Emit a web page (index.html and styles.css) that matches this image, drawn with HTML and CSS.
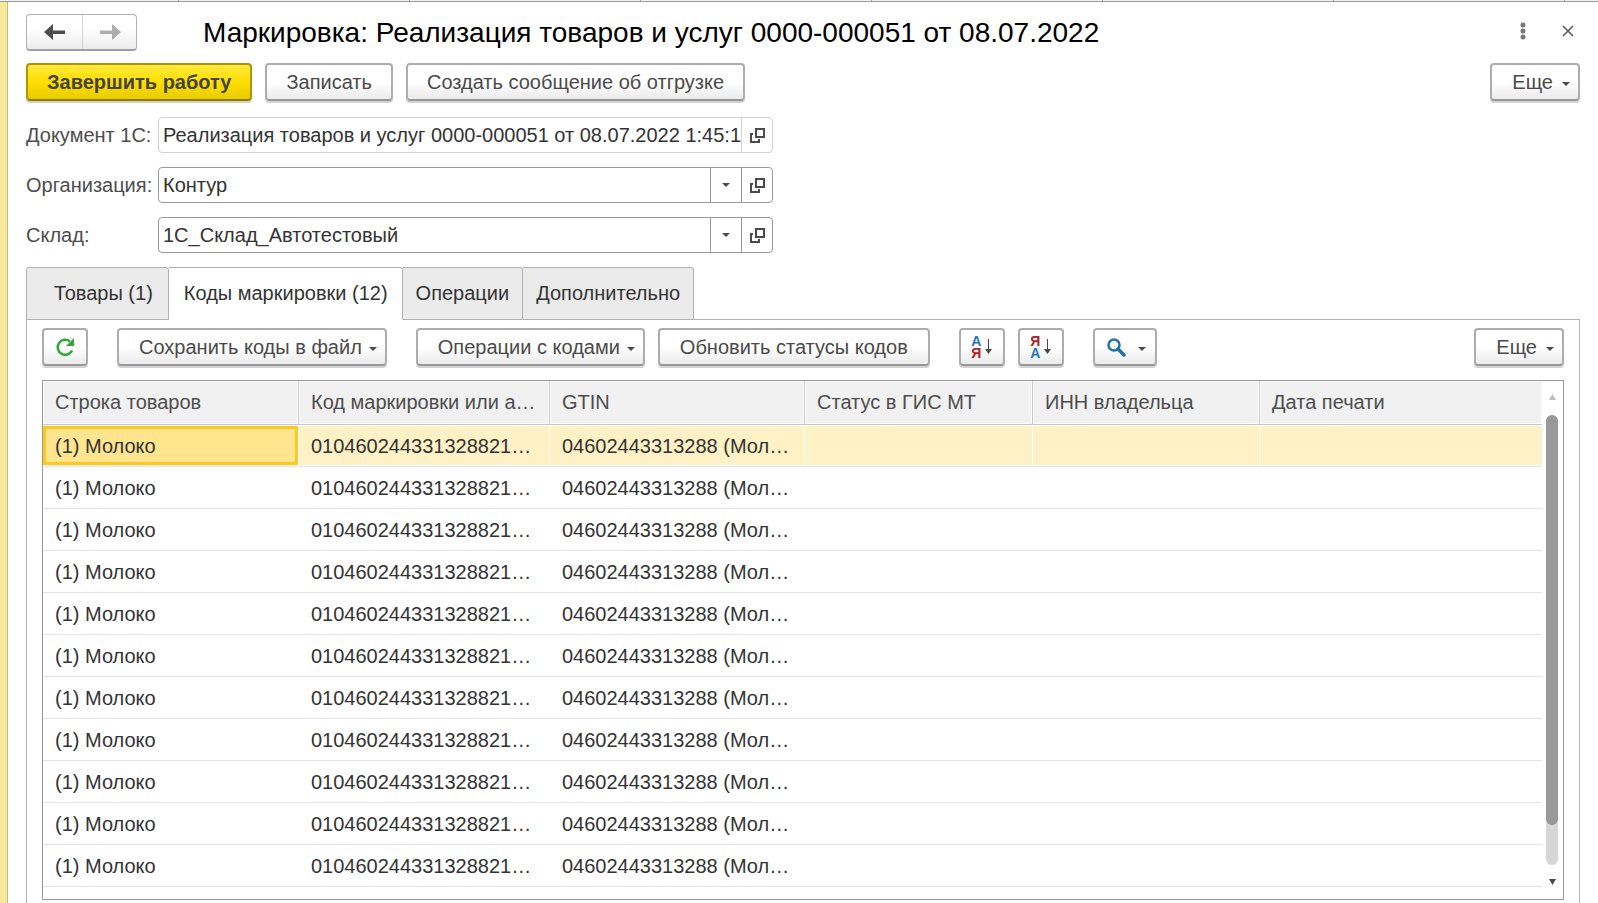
FILE: index.html
```html
<!DOCTYPE html>
<html lang="ru">
<head>
<meta charset="utf-8">
<title>Маркировка: Реализация товаров и услуг</title>
<link rel="stylesheet" href="styles.css">
</head>
<body>
<svg class="defs" aria-hidden="true">
  <symbol id="open" viewBox="0 0 15 15"><path d="M6 1h8v8H6z" fill="none" stroke="#4a4a4a" stroke-width="2"/><path d="M0 5h3v2H2v6h6v-2h2v4H0z" fill="#4a4a4a"/></symbol>
  <symbol id="caret" viewBox="0 0 8 4"><path d="M0 0h8L4 4z" fill="#4a4a4a"/></symbol>
  <symbol id="down" viewBox="0 0 7 16"><path d="M3 0h1v10h3L3.500 15 0 10h3z" fill="#4a4a4a"/></symbol>
</svg>
<div class="window-tabs"><i></i><i></i><i></i><i></i><i></i><i></i><i></i></div>
<main class="form">
  <header class="title-row">
    <div class="nav">
      <button type="button" aria-label="Назад"><svg width="22" height="16" viewBox="0 0 22 16"><path d="M0 8l9-8v6.500h12v3.500H9v6z" fill="#4d4d4d"/></svg></button>
      <button type="button" aria-label="Вперед"><svg width="22" height="16" viewBox="0 0 22 16"><path d="M22 8l-9-8v6.500H1v3.500h12v6z" fill="#adadad"/></svg></button>
    </div>
    <h1>Маркировка: Реализация товаров и услуг 0000-000051 от 08.07.2022</h1>
    <div class="window-actions">
      <button type="button" aria-label="Меню"><svg width="6" height="18" viewBox="0 0 6 18"><g fill="#777"><circle cx="3" cy="3" r="2.500"/><circle cx="3" cy="9" r="2.500"/><circle cx="3" cy="15" r="2.500"/></g></svg></button>
      <button type="button" aria-label="Закрыть"><svg width="12" height="12" viewBox="0 0 12 12"><path d="M1 1l10 10M11 1L1 11" stroke="#555" stroke-width="1.500"/></svg></button>
    </div>
  </header>
  <div class="commands">
    <button type="button" class="btn primary">Завершить работу</button>
    <button type="button" class="btn">Записать</button>
    <button type="button" class="btn">Создать сообщение об отгрузке</button>
    <button type="button" class="btn drop push">Еще<svg class="caret"><use href="#caret"/></svg></button>
  </div>
  <div class="fields">
    <label for="doc">Документ 1С:</label>
    <div class="field readonly"><input id="doc" readonly value="Реализация товаров и услуг 0000-000051 от 08.07.2022 1:45:1"><button type="button" aria-label="Открыть документ"><svg class="open"><use href="#open"/></svg></button></div>
    <label for="org">Организация:</label>
    <div class="field"><input id="org" value="Контур"><button type="button" aria-label="Выбрать организацию"><svg class="caret"><use href="#caret"/></svg></button><button type="button" aria-label="Открыть организацию"><svg class="open"><use href="#open"/></svg></button></div>
    <label for="store">Склад:</label>
    <div class="field"><input id="store" value="1С_Склад_Автотестовый"><button type="button" aria-label="Выбрать склад"><svg class="caret"><use href="#caret"/></svg></button><button type="button" aria-label="Открыть склад"><svg class="open"><use href="#open"/></svg></button></div>
  </div>
  <div class="tabs" role="tablist">
    <button type="button" role="tab" class="first">Товары (1)</button>
    <button type="button" role="tab" aria-selected="true">Коды маркировки (12)</button>
    <button type="button" role="tab">Операции</button>
    <button type="button" role="tab">Дополнительно</button>
  </div>
  <section class="panel">
    <div class="toolbar">
      <div class="group"><button type="button" class="btn icon" aria-label="Обновить"><svg width="20" height="20" viewBox="0 0 20 20"><path d="M17 13.500A7.500 7.500 0 1 1 15 4.500" fill="none" stroke="#2ea836" stroke-width="2.500"/><path d="M19 1v8h-8z" fill="#2ea836"/></svg></button></div>
      <div class="group"><button type="button" class="btn drop">Сохранить коды в файл<svg class="caret"><use href="#caret"/></svg></button></div>
      <div class="group">
        <button type="button" class="btn drop">Операции с кодами<svg class="caret"><use href="#caret"/></svg></button>
        <button type="button" class="btn">Обновить статусы кодов</button>
      </div>
      <div class="group">
        <button type="button" class="btn icon sort" aria-label="По возрастанию"><span class="letters"><b class="blue">А</b><b class="red">Я</b></span><svg width="7" height="16"><use href="#down"/></svg></button>
        <button type="button" class="btn icon sort" aria-label="По убыванию"><span class="letters"><b class="red">Я</b><b class="blue">А</b></span><svg width="7" height="16"><use href="#down"/></svg></button>
      </div>
      <div class="group"><button type="button" class="btn search" aria-label="Найти"><svg width="19" height="19" viewBox="0 0 19 19"><circle cx="7" cy="7" r="5.500" fill="none" stroke="#2271ab" stroke-width="2.500"/><path d="M11 11l6 6" stroke="#2271ab" stroke-width="3.500" stroke-linecap="round"/></svg><svg class="caret"><use href="#caret"/></svg></button></div>
      <button type="button" class="btn drop push">Еще<svg class="caret"><use href="#caret"/></svg></button>
    </div>
    <div class="grid">
      <table>
        <colgroup><col class="c1"><col class="c2"><col class="c3"><col class="c4"><col class="c5"><col></colgroup>
        <thead><tr><th>Строка товаров</th><th>Код маркировки или а…</th><th>GTIN</th><th>Статус в ГИС МТ</th><th>ИНН владельца</th><th>Дата печати</th></tr></thead>
        <tbody>
          <tr class="current"><td>(1) Молоко</td><td>010460244331328821…</td><td>04602443313288 (Мол…</td><td></td><td></td><td></td></tr>
          <tr><td>(1) Молоко</td><td>010460244331328821…</td><td>04602443313288 (Мол…</td><td></td><td></td><td></td></tr>
          <tr><td>(1) Молоко</td><td>010460244331328821…</td><td>04602443313288 (Мол…</td><td></td><td></td><td></td></tr>
          <tr><td>(1) Молоко</td><td>010460244331328821…</td><td>04602443313288 (Мол…</td><td></td><td></td><td></td></tr>
          <tr><td>(1) Молоко</td><td>010460244331328821…</td><td>04602443313288 (Мол…</td><td></td><td></td><td></td></tr>
          <tr><td>(1) Молоко</td><td>010460244331328821…</td><td>04602443313288 (Мол…</td><td></td><td></td><td></td></tr>
          <tr><td>(1) Молоко</td><td>010460244331328821…</td><td>04602443313288 (Мол…</td><td></td><td></td><td></td></tr>
          <tr><td>(1) Молоко</td><td>010460244331328821…</td><td>04602443313288 (Мол…</td><td></td><td></td><td></td></tr>
          <tr><td>(1) Молоко</td><td>010460244331328821…</td><td>04602443313288 (Мол…</td><td></td><td></td><td></td></tr>
          <tr><td>(1) Молоко</td><td>010460244331328821…</td><td>04602443313288 (Мол…</td><td></td><td></td><td></td></tr>
          <tr><td>(1) Молоко</td><td>010460244331328821…</td><td>04602443313288 (Мол…</td><td></td><td></td><td></td></tr>
        </tbody>
      </table>
      <div class="scroll">
        <svg width="7" height="6" viewBox="0 0 7 6"><path d="M0 6h7L3.500 0z" fill="#bdbdbd"/></svg>
        <div class="track"><div class="thumb"></div></div>
        <svg width="7" height="6" viewBox="0 0 7 6"><path d="M0 0h7L3.500 6z" fill="#4a4a4a"/></svg>
      </div>
    </div>
  </section>
</main>
</body>
</html>
```
FILE: styles.css
```css
* { box-sizing: border-box; }
body {
  margin: 0;
  min-height: 100vh;
  display: flex;
  flex-direction: column;
  background: #fff;
  color: #333;
  font: 20px/24px "Liberation Sans", Arial, sans-serif;
}
button, input { font: inherit; color: inherit; }
button { margin: 0; padding: 0; border: 0; background: none; white-space: nowrap; }
svg { flex: none; display: block; }
.defs { position: absolute; width: 0; height: 0; }
.caret { width: 8px; height: 4px; }
.btn .caret { margin-top: 4px; }
.open { width: 15px; height: 15px; }

.window-tabs { display: flex; height: 2px; background: #f2f2f2; border-bottom: 1px solid #999; }
.window-tabs i { width: 231px; border-right: 1px solid #999; }
.window-tabs i:first-child { width: 179px; }

.form {
  flex: 1;
  display: flex;
  flex-direction: column;
  padding: 12px 18px 0 19px;
  border-left: 7px solid #fbe99b;
  box-shadow: inset 1px 0 #c8bc7c;
}

.title-row { display: flex; align-items: center; height: 37px; }
.nav {
  display: flex;
  height: 37px;
  border: 1px solid #b3b3b3;
  border-bottom: 2px solid #a0a0a0;
  border-radius: 4px;
  background: linear-gradient(#fff 40%, #ececec);
}
.nav button { width: 55px; display: flex; align-items: center; justify-content: center; }
.nav button + button { width: 54px; border-left: 1px solid #d2d2d2; }
h1 { margin: 0 0 0 66px; font-size: 28px; line-height: 36px; font-weight: 400; color: #000; white-space: nowrap; }
.window-actions { display: flex; align-items: center; gap: 36px; margin-left: auto; padding: 0 6px 3px 0; }

.btn {
  display: flex;
  align-items: center;
  justify-content: center;
  height: 38px;
  padding: 0 20px;
  border: 2px solid #adadad;
  border-bottom-color: #979797;
  border-radius: 4px;
  background: linear-gradient(#fff 50%, #ebebeb);
  box-shadow: 0 2px #d2d2d2;
  color: #4a4a4a;
}
.commands .btn { padding: 0 19px; }
.btn.drop, .commands .drop { gap: 7px; padding: 0 8px 0 20px; }
.btn.push, .commands .push { gap: 9px; }
.btn.icon { width: 46px; padding: 0; }
.btn.search { gap: 12px; padding: 0 9px 0 12px; }
.btn.primary {
  border-color: #ab9600;
  border-bottom-color: #8f7e00;
  background: linear-gradient(#ffe93e, #ffdf00 50%, #e8cb00);
  color: #444;
  font-weight: 700;
}
.push { margin-left: auto; }
.commands { display: flex; gap: 13px; margin-top: 12px; }

.fields {
  display: grid;
  grid-template-columns: 132px 615px;
  row-gap: 14px;
  align-items: center;
  margin-top: 16px;
}
.fields label { color: #4d4d4d; white-space: nowrap; }
.field { display: flex; height: 36px; border: 1px solid #999; border-radius: 4px; }
.field input { flex: 1; min-width: 0; padding: 0 0 0 4px; border: 0; outline: 0; background: none; }
.field button { width: 31px; display: flex; align-items: center; justify-content: center; border-left: 1px solid #999; }
.field.readonly, .field.readonly button { border-color: #d2d2d2; }

.tabs { position: relative; z-index: 1; display: flex; align-self: flex-start; margin-top: 14px; }
.tabs button {
  height: 53px;
  padding: 0 13px 2px;
  border: 1px solid #b0b0b0;
  border-left-width: 0;
  border-radius: 0 3px 0 0;
  background: #ebebeb;
}
.tabs .first { padding-left: 27px; padding-right: 15px; border-left-width: 1px; border-radius: 3px 3px 0 0; }
.tabs [aria-selected] { padding-left: 15px; padding-right: 14px; background: #fff; border-bottom-color: #fff; }

.panel {
  flex: 1;
  display: flex;
  flex-direction: column;
  margin-top: -1px;
  padding: 8px 15px 3px;
  border: 1px solid #b0b0b0;
  border-bottom: 0;
}
.toolbar { display: flex; gap: 29px; }
.group { display: flex; gap: 13px; }
.sort { gap: 4px; }
.letters { display: flex; flex-direction: column; font-size: 14px; line-height: 12px; }
.blue { color: #1f78bd; }
.red { color: #b3202a; }

.grid { flex: 1; display: flex; margin-top: 14px; border: 1px solid #999; }
table { flex: 1; align-self: flex-start; width: 0; table-layout: fixed; border-collapse: separate; border-spacing: 0; }
.c1 { width: 256px; }
.c2 { width: 251px; }
.c3 { width: 255px; }
.c4 { width: 228px; }
.c5 { width: 227px; }
th, td {
  height: 42px;
  padding: 0 12px;
  overflow: hidden;
  text-align: left;
  text-overflow: ellipsis;
  white-space: nowrap;
  border-bottom: 1px solid #e3e3e3;
}
th {
  height: 44px;
  padding-bottom: 2px;
  font-weight: 400;
  color: #4d4d4d;
  background: #f1f1f1;
  border-right: 1px solid #c8c8c8;
  border-bottom-color: #c8c8c8;
  box-shadow: inset 0 0 0 1px #fff;
}
th:last-child { border-right: 0; }
.current td { background: #fdf1c5; box-shadow: inset -1px 0 #fff, inset 0 1px #fff, inset 0 -1px #fff; }
.current td:first-child { background: #ffe58e; box-shadow: inset -1px 0 #fff, inset 0 1px #fff, inset 0 -1px #fff, inset 0 4px #fbc91f, inset 0 -4px #fbc91f, inset 3px 0 #fbc91f, inset -4px 0 #fbc91f; }
.current td:last-child { box-shadow: inset 0 1px #fff, inset 0 -1px #fff; }
.scroll { width: 21px; display: flex; flex-direction: column; align-items: center; padding: 13px 1px 14px 0; }
.track { flex: 1; width: 12px; margin: 15px 0 14px; border-radius: 6px; background: #d6d6d6; }
.thumb { height: 91%; border-radius: 6px; background: #999; }
```
